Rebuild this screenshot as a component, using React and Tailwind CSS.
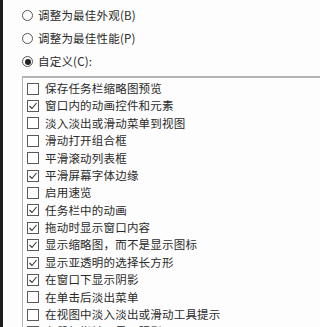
import React from "react";

const items = [
  ["保存任务栏缩略图预览", false],
  ["窗口内的动画控件和元素", true],
  ["淡入淡出或滑动菜单到视图", false],
  ["滑动打开组合框", false],
  ["平滑滚动列表框", false],
  ["平滑屏幕字体边缘", true],
  ["启用速览", false],
  ["任务栏中的动画", true],
  ["拖动时显示窗口内容", true],
  ["显示缩略图，而不是显示图标", true],
  ["显示亚透明的选择长方形", true],
  ["在窗口下显示阴影", true],
  ["在单击后淡出菜单", false],
  ["在视图中淡入淡出或滑动工具提示", false],
  ["在鼠标指针下显示阴影", false],
];

function Radio({ checked, label }) {
  return (
    <div className="flex items-center h-[23px]">
      <div className="w-[11px] h-[11px] rounded-full border border-[#555] flex items-center justify-center bg-white shrink-0">
        {checked && <div className="w-[6px] h-[6px] rounded-full bg-[#222]" />}
      </div>
      <span className="ml-[5px] text-[11.5px] text-[#2a2a2a] tracking-[0.2px] whitespace-nowrap">{label}</span>
    </div>
  );
}

function Check({ checked }) {
  return (
    <div className="w-[12px] h-[12px] border border-[#5a5a5a] bg-white shrink-0 flex items-center justify-center">
      {checked && (
        <svg width="10" height="10" viewBox="0 0 10 10">
          <polyline points="1.5,5 4,7.5 8.5,2" fill="none" stroke="#333" strokeWidth="1.1" />
        </svg>
      )}
    </div>
  );
}

export default function App() {
  return (
    <div
      className="w-[320px] h-[327px] overflow-hidden bg-[#fdfdfd] flex"
      style={{ fontFamily: '"Noto Sans CJK SC", "Noto Sans", sans-serif' }}
    >
      <div className="w-[3px] bg-[#1c1c1c] shrink-0" />
      <div className="flex-1 flex flex-col">
        <div className="pl-[19px] pt-[4px] flex flex-col">
          <Radio checked={false} label="调整为最佳外观(B)" />
          <Radio checked={false} label="调整为最佳性能(P)" />
          <Radio checked={true} label="自定义(C):" />
        </div>
        <div className="ml-[19px] mt-[3px] w-[320px] border-t-2 border-l border-[#b4b4b4] pl-[4px] pt-[2px] flex flex-col">
          {items.map(([t, c]) => (
            <div key={t} className="flex items-center h-[17.4px]">
              <Check checked={c} />
              <span className="ml-[6px] text-[11.5px] text-[#2a2a2a] tracking-[0.2px] whitespace-nowrap leading-none">{t}</span>
            </div>
          ))}
        </div>
      </div>
    </div>
  );
}
